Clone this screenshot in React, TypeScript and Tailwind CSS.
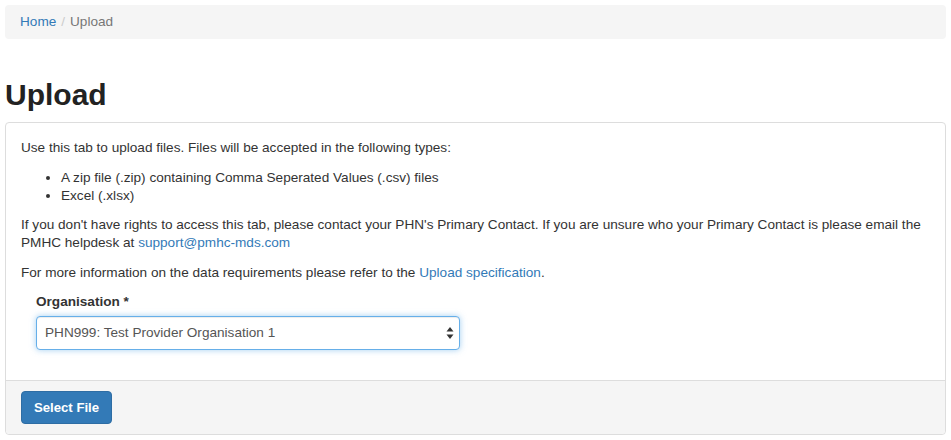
const font = { fontFamily: '"Liberation Sans", Arial, sans-serif' };

function SelectArrows(): React.ReactNode {
  return (
    <svg width="8" height="14" viewBox="0 0 8 14" className="absolute right-[6px] top-1/2 -translate-y-1/2">
      <path d="M4 1 L7.5 5.5 H0.5 Z" fill="#333" />
      <path d="M4 13 L7.5 8.5 H0.5 Z" fill="#333" />
    </svg>
  );
}

export default function App(): React.ReactNode {
  return (
    <div
      className="p-[5px] text-[13.6px] leading-[18px] text-[#333]"
      style={font}
    >
      <ol className="flex items-center rounded bg-[#f5f5f5] px-[15px] py-[8px]">
        <li>
          <a href="#" className="text-[#337ab7]">
            Home
          </a>
        </li>
        <li className="flex items-center">
          <span className="px-[5px] text-[#ccc]">/</span>
          <span className="text-[#777]">Upload</span>
        </li>
      </ol>

      <h1 className="mt-[38px] mb-[9px] text-[30px] leading-[36px] font-bold text-[#222]">
        Upload
      </h1>

      <div className="rounded border border-[#ddd] bg-white">
        <div className="px-[15px] pt-[16px] pb-[15px]">
          <p className="mb-[11.5px]">
            Use this tab to upload files. Files will be accepted in the
            following types:
          </p>
          <ul className="mb-[11.5px] list-disc pl-[40px]">
            <li>A zip file (.zip) containing Comma Seperated Values (.csv) files</li>
            <li>Excel (.xlsx)</li>
          </ul>
          <p className="mb-[11.5px]">
            If you don't have rights to access this tab, please contact your
            PHN's Primary Contact. If you are unsure who your Primary Contact is
            please email the PMHC helpdesk at{" "}
            <a href="#" className="text-[#337ab7]">
              support@pmhc-mds.com
            </a>
          </p>
          <p className="mb-[11.5px]">
            For more information on the data requirements please refer to the{" "}
            <a href="#" className="text-[#337ab7]">
              Upload specification
            </a>
            .
          </p>
          <div className="w-[454px] px-[15px] pb-[15px]">
            <label className="mb-[5px] block font-bold">Organisation *</label>
            <div className="relative">
              <div className="flex h-[34px] items-center rounded border border-[#66afe9] bg-white px-[8px] text-[#555] shadow-[inset_0_1px_1px_rgba(0,0,0,0.075),0_0_6px_rgba(102,175,233,0.6)]">
                PHN999: Test Provider Organisation 1
              </div>
              <SelectArrows />
            </div>
          </div>
        </div>
        <div className="rounded-b border-t border-[#ddd] bg-[#f5f5f5] px-[15px] py-[10px]">
          <button className="h-[33px] w-[91px] rounded border border-[#2e6da4] bg-[#337ab7] text-[13.2px] font-bold text-white">
            Select File
          </button>
        </div>
      </div>
    </div>
  );
}
